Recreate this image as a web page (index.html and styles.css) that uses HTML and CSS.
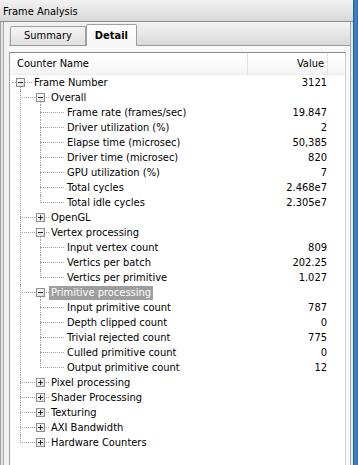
FILE: index.html
```html
<!DOCTYPE html>
<html lang="en">
<head>
  <meta charset="UTF-8">
  <title>Frame Analysis</title>
  <link rel="stylesheet" href="styles.css">
</head>
<body>
  <div class="main">
    <div class="titlebar">Frame Analysis</div>
    <div class="content">
      <div class="strip"></div>
      <div class="pane">
        <div class="tabs">
          <div class="tab">Summary</div>
          <div class="tab active">Detail</div>
        </div>
        <div class="panel">
          <div class="list">
            <div class="head">
              <div class="h-name">Counter Name</div>
              <div class="h-val">Value</div>
              <div class="h-rest"></div>
            </div>
            <ul class="tree">
              <li class="open">
                <div class="row l0"><span class="name"><i class="box"></i><span class="label">Frame Number</span></span><span class="val">3121</span></div>
                <ul>
                  <li class="open">
                    <div class="row l1"><span class="name"><i class="box"></i><span class="label">Overall</span></span><span class="val"></span></div>
                    <ul>
                      <li><div class="row l2"><span class="name"><span class="label">Frame rate (frames/sec)</span></span><span class="val">19.847</span></div></li>
                      <li><div class="row l2"><span class="name"><span class="label">Driver utilization (%)</span></span><span class="val">2</span></div></li>
                      <li><div class="row l2"><span class="name"><span class="label">Elapse time (microsec)</span></span><span class="val">50,385</span></div></li>
                      <li><div class="row l2"><span class="name"><span class="label">Driver time (microsec)</span></span><span class="val">820</span></div></li>
                      <li><div class="row l2"><span class="name"><span class="label">GPU utilization (%)</span></span><span class="val">7</span></div></li>
                      <li><div class="row l2"><span class="name"><span class="label">Total cycles</span></span><span class="val">2.468e7</span></div></li>
                      <li><div class="row l2"><span class="name"><span class="label">Total idle cycles</span></span><span class="val">2.305e7</span></div></li>
                    </ul>
                  </li>
                  <li><div class="row l1"><span class="name"><i class="box plus"></i><span class="label">OpenGL</span></span><span class="val"></span></div></li>
                  <li class="open">
                    <div class="row l1"><span class="name"><i class="box"></i><span class="label">Vertex processing</span></span><span class="val"></span></div>
                    <ul>
                      <li><div class="row l2"><span class="name"><span class="label">Input vertex count</span></span><span class="val">809</span></div></li>
                      <li><div class="row l2"><span class="name"><span class="label">Vertics per batch</span></span><span class="val">202.25</span></div></li>
                      <li><div class="row l2"><span class="name"><span class="label">Vertics per primitive</span></span><span class="val">1.027</span></div></li>
                    </ul>
                  </li>
                  <li class="open">
                    <div class="row l1"><span class="name"><i class="box"></i><span class="label selected">Primitive processing</span></span><span class="val"></span></div>
                    <ul>
                      <li><div class="row l2"><span class="name"><span class="label">Input primitive count</span></span><span class="val">787</span></div></li>
                      <li><div class="row l2"><span class="name"><span class="label">Depth clipped count</span></span><span class="val">0</span></div></li>
                      <li><div class="row l2"><span class="name"><span class="label">Trivial rejected count</span></span><span class="val">775</span></div></li>
                      <li><div class="row l2"><span class="name"><span class="label">Culled primitive count</span></span><span class="val">0</span></div></li>
                      <li><div class="row l2"><span class="name"><span class="label">Output primitive count</span></span><span class="val">12</span></div></li>
                    </ul>
                  </li>
                  <li><div class="row l1"><span class="name"><i class="box plus"></i><span class="label">Pixel processing</span></span><span class="val"></span></div></li>
                  <li><div class="row l1"><span class="name"><i class="box plus"></i><span class="label">Shader Processing</span></span><span class="val"></span></div></li>
                  <li><div class="row l1"><span class="name"><i class="box plus"></i><span class="label">Texturing</span></span><span class="val"></span></div></li>
                  <li><div class="row l1"><span class="name"><i class="box plus"></i><span class="label">AXI Bandwidth</span></span><span class="val"></span></div></li>
                  <li><div class="row l1"><span class="name"><i class="box plus"></i><span class="label">Hardware Counters</span></span><span class="val"></span></div></li>
                </ul>
              </li>
            </ul>
          </div>
        </div>
      </div>
      <div class="rstrip"></div>
    </div>
  </div>
  <div class="edge"></div>
</body>
</html>
```

FILE: styles.css
```css
body {
  margin: 0;
  width: 358px;
  height: 465px;
  overflow: hidden;
  display: flex;
  font-family: "DejaVu Sans Condensed", "DejaVu Sans", sans-serif;
  font-stretch: condensed;
  font-size: 11px;
  color: #000;
  background: #f8f8f8;
}

.main {
  flex: 1;
  display: flex;
  flex-direction: column;
}

.edge {
  width: 5px;
  background: linear-gradient(90deg, #1f5c9c, #3f88c9 50%, #2b6db0);
}

.titlebar {
  height: 17px;
  padding: 4px 0 0 3px;
  line-height: 16px;
  background: linear-gradient(#f2f2f2, #d8d8d8);
  border-bottom: 1px solid #8c8c8c;
}

.content {
  flex: 1;
  display: flex;
}

.strip {
  width: 9px;
  background: linear-gradient(90deg, #a2a2a2 0 1px, #e2e2e2 1px 3px, #a8a8a8 3px 4px, #f0f0f0 4px);
}

.rstrip {
  width: 2px;
  background: #e8e8e8;
}

.pane {
  flex: 1;
  display: flex;
  flex-direction: column;
  padding-right: 4px;
  border-right: 1px solid #a8a8a8;
}

.tabs {
  height: 23px;
  display: flex;
  align-items: flex-end;
  padding-left: 1px;
  margin-right: -4px;
  background: linear-gradient(#f3f3f3, #d9d9d9);
  border-bottom: 1px solid #9a9a9a;
}

.tab {
  height: 18px;
  line-height: 18px;
  padding: 0 13px;
  border: 1px solid #a0a0a0;
  border-bottom: none;
  border-radius: 2px 2px 0 0;
  background: linear-gradient(#f4f4f4, #e0e0e0);
}

.tab.active {
  height: 21px;
  line-height: 21px;
  padding: 0 8px;
  margin-bottom: -1px;
  font-weight: bold;
  background: linear-gradient(#ffffff, #f6f6f6);
}

.panel {
  flex: 1;
  display: flex;
  padding-top: 6px;
}

.list {
  flex: 1;
  background: #fff;
  border: 1px solid #a0a0a0;
  border-top-color: #8a8a8a;
  border-right-color: #cfcfcf;
  border-bottom: none;
}

.head {
  display: flex;
  height: 21px;
  line-height: 21px;
  border-bottom: 1px solid #ececec;
  background: linear-gradient(#ffffff, #f5f5f5);
}

.h-name {
  flex: 1;
  padding-left: 7px;
  border-right: 1px solid #e2e2e2;
}

.h-val {
  width: 76px;
  padding-right: 3px;
  text-align: right;
  border-right: 1px solid #e2e2e2;
}

.h-rest {
  width: 17px;
}

.tree, .tree ul {
  list-style: none;
  margin: 0;
  padding: 0;
}

.tree li {
  position: relative;
}

.row {
  position: relative;
  display: flex;
  height: 15px;
  line-height: 15px;
}

.name {
  flex: 1;
  display: flex;
  align-items: center;
  white-space: nowrap;
}

.val {
  width: 79px;
  padding-right: 1px;
  text-align: right;
  margin-right: 17px;
}

.l0 .name { padding-left: 6px; }
.l1 .name { padding-left: 26px; }
.l2 .name { padding-left: 55px; }
.l0 .box { margin-right: 7px; }
.l1 .box { margin-right: 4px; }

.label {
  padding: 0 2px;
  line-height: 14px;
}

.label.selected {
  background: #9e9e9e;
  color: #fff;
}

/* tree lines */
.row::before {
  content: "";
  position: absolute;
  top: 7px;
  border-top: 1px dotted #a0a0a0;
}

.l0::before { left: 2px; width: 20px; }
.l1::before { left: 10px; width: 29px; }
.l2::before { left: 30px; width: 24px; }

.tree ul > li::after {
  content: "";
  position: absolute;
  top: 0;
  bottom: 0;
  border-left: 1px dotted #a0a0a0;
}

.tree ul > li:last-child::after {
  bottom: auto;
  height: 8px;
}

.tree > li > ul > li::after { left: 10px; }
.tree ul ul > li::after { left: 30px; }

.open > .row::after {
  content: "";
  position: absolute;
  top: 8px;
  height: 7px;
  border-left: 1px dotted #a0a0a0;
}

.open > .l0::after { left: 10px; }
.open > .l1::after { left: 30px; }

.box {
  position: relative;
  z-index: 1;
  flex: none;
  width: 9px;
  height: 9px;
  box-sizing: border-box;
  border: 1px solid #8e8e8e;
  background: linear-gradient(135deg, #ffffff, #dcdcdc);
}

.box::before {
  content: "";
  position: absolute;
  left: 1px;
  top: 3px;
  width: 5px;
  height: 1px;
  background: #2a2a2a;
}

.box.plus::after {
  content: "";
  position: absolute;
  left: 3px;
  top: 1px;
  width: 1px;
  height: 5px;
  background: #2a2a2a;
}
```
